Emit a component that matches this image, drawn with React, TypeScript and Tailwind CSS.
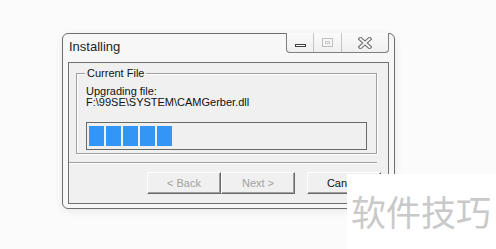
import React from "react";

const font = { fontFamily: '"Liberation Sans", Arial, sans-serif' };

function TitleButtons() {
  return (
    <div className="-mt-px flex h-[20px] rounded-b-[4px] border border-t-0 border-[#7f7f7f] bg-gradient-to-b from-[#fbfbfb] to-[#efefef]">
      <div className="flex w-[27px] items-end justify-center border-r border-[#c4c4c4] pb-[5px]">
        <div className="h-[3px] w-[11px] border border-[#404040] bg-white" />
      </div>
      <div className="flex w-[28px] items-center justify-center border-r border-[#c4c4c4]">
        <div className="flex h-[9px] w-[11px] items-center justify-center border border-[#c0c0c0]">
          <div className="h-[3px] w-[5px] border border-[#c8c8c8]" />
        </div>
      </div>
      <div className="flex w-[46px] items-center justify-center">
        <svg width="14" height="12" viewBox="0 0 14 12">
          <path d="M2.5 2 L11.5 10 M11.5 2 L2.5 10" stroke="#6a6a6a" strokeWidth="4" strokeLinecap="square" />
          <path d="M2.5 2 L11.5 10 M11.5 2 L2.5 10" stroke="#f4f4f4" strokeWidth="2" strokeLinecap="square" />
        </svg>
      </div>
    </div>
  );
}

function Btn({ label, disabled }: { label: string; disabled?: boolean }) {
  return (
    <div
      className={
        "flex h-[22px] w-[74px] items-center justify-center border border-t-white border-l-white border-r-[#696969] border-b-[#696969] bg-[#f0f0f0] text-[11px] shadow-[inset_-1px_-1px_0_#a0a0a0] " +
        (disabled ? "text-[#a0a0a0]" : "text-[#111]")
      }
      style={font}
    >
      {label}
    </div>
  );
}

export default function App() {
  return (
    <div className="relative h-[249px] w-[496px] overflow-hidden bg-[#fbfbfb]" style={font}>
      <div className="pl-[62px] pt-[33px]">
        <div className="flex h-[176px] w-[333px] flex-col rounded-[6px] border border-[#6e6e6e] bg-[#f7f7f7] shadow-[0_2px_8px_rgba(0,0,0,0.08)]">
          <div className="flex h-[28px] items-start justify-between pl-[6px] pr-[5px]">
            <div className="mt-[5px] text-[13px] leading-[15px] text-[#1e1e1e]">Installing</div>
            <TitleButtons />
          </div>
          <div className="mx-[5px] flex h-[142px] flex-col border border-[#707070] bg-[#f0f0f0]">
            <div className="relative ml-[7px] mt-[10px] h-[81px] w-[301px] border border-[#a0a0a0] shadow-[inset_1px_1px_0_#ffffff,1px_1px_0_#ffffff] px-[9px] pt-[12px]">
              <div className="absolute left-[8px] top-[-7px] bg-[#f0f0f0] px-[2px] text-[11px] leading-[13px] text-[#111]">
                Current File
              </div>
              <div className="text-[11px] leading-[11px] text-[#111]">
                <div>Upgrading file:</div>
                <div>F:\99SE\SYSTEM\CAMGerber.dll</div>
              </div>
              <div className="mt-[14px] flex h-[28px] w-[281px] items-center gap-[2px] border border-[#6a6a6a] pl-[2px]">
                <div className="h-[20px] w-[15px] bg-[#3395f5]" />
                <div className="h-[20px] w-[15px] bg-[#3395f5]" />
                <div className="h-[20px] w-[15px] bg-[#3395f5]" />
                <div className="h-[20px] w-[15px] bg-[#3395f5]" />
                <div className="h-[20px] w-[15px] bg-[#3395f5]" />
              </div>
            </div>
            <div className="mt-[8px] h-[2px] w-[308px] border-t border-b border-t-[#a0a0a0] border-b-white" />
            <div className="mt-[8px] flex justify-end pr-[7px]">
              <div className="flex">
                <Btn label="< Back" disabled />
                <Btn label="Next >" disabled />
              </div>
              <div className="ml-[12px]">
                <Btn label="Cancel" />
              </div>
            </div>
          </div>
        </div>
      </div>
      <div className="absolute bottom-0 left-[347px] right-0 top-[174px] bg-white pl-[4px] pt-[19px]">
        <div
          className="text-[35px] leading-[35px] text-[#c9c9c9]"
          style={{ fontFamily: '"Noto Sans CJK SC", sans-serif' }}
        >
          软件技巧
        </div>
      </div>
    </div>
  );
}
